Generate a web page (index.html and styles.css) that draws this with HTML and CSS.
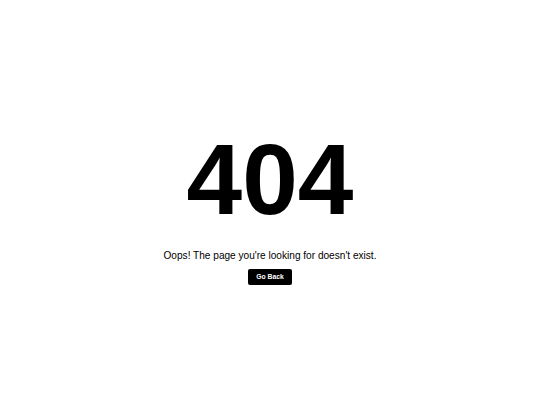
FILE: index.html
```html
<!DOCTYPE html>
<html>
<head>
<meta charset="utf-8">
<link rel="stylesheet" href="styles.css">
</head>
<body>
<main class="page">
  <h1 class="code">404</h1>
  <p class="message">Oops! The page you're looking for doesn't exist.</p>
  <button class="back">Go Back</button>
</main>
</body>
</html>
```

FILE: styles.css
```css
html, body {
  margin: 0;
  padding: 0;
  background: #ffffff;
}
.page {
  box-sizing: border-box;
  height: 405px;
  padding-top: 8px;
  display: flex;
  flex-direction: column;
  align-items: center;
  justify-content: center;
  font-family: "Liberation Sans", Arial, sans-serif;
  color: #000;
}
.code {
  margin: 0;
  font-size: 100px;
  line-height: 1;
  font-weight: 700;
}
.message {
  margin: 21px 0 0;
  font-size: 10.1px;
  line-height: 12px;
}
.back {
  margin-top: 7px;
  background: #000;
  color: #fff;
  border: none;
  border-radius: 2px;
  font-family: "Liberation Sans", Arial, sans-serif;
  font-weight: 700;
  font-size: 6.8px;
  padding: 5px 8px;
  line-height: 6px;
}
```
